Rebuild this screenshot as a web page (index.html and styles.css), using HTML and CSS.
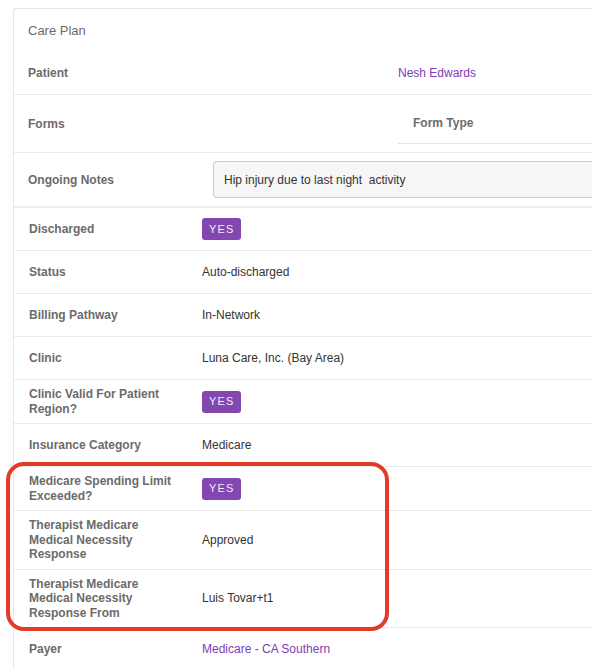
FILE: index.html
```html
<!DOCTYPE html>
<html>
<head>
<meta charset="utf-8">
<link rel="stylesheet" href="styles.css">
</head>
<body>
<div class="page">
  <div class="card">
    <div class="title">Care Plan</div>
    <div class="top-row patient">
      <div class="top-label">Patient</div>
      <div class="top-value"><span class="link">Nesh Edwards</span></div>
    </div>
    <div class="top-row forms">
      <div class="top-label">Forms</div>
      <div class="top-value nested">
        <div class="nested-head">Form Type</div>
      </div>
    </div>
    <div class="notes-row">
      <div class="notes-label">Ongoing Notes</div>
      <div class="notes-box">Hip injury due to last night&nbsp; activity</div>
    </div>
    <div class="details">
      <div class="row"><div class="label">Discharged</div><div class="value"><span class="badge">YES</span></div></div>
      <div class="row"><div class="label">Status</div><div class="value">Auto-discharged</div></div>
      <div class="row"><div class="label">Billing Pathway</div><div class="value">In-Network</div></div>
      <div class="row"><div class="label">Clinic</div><div class="value">Luna Care, Inc. (Bay Area)</div></div>
      <div class="row"><div class="label">Clinic Valid For Patient Region?</div><div class="value"><span class="badge">YES</span></div></div>
      <div class="row"><div class="label">Insurance Category</div><div class="value">Medicare</div></div>
      <div class="row"><div class="label">Medicare Spending Limit Exceeded?</div><div class="value"><span class="badge">YES</span></div></div>
      <div class="row"><div class="label">Therapist Medicare Medical Necessity Response</div><div class="value">Approved</div></div>
      <div class="row"><div class="label">Therapist Medicare Medical Necessity Response From</div><div class="value">Luis Tovar+t1</div></div>
      <div class="row"><div class="label">Payer</div><div class="value"><span class="link">Medicare - CA Southern</span></div></div>
    </div>
  </div>
  <div class="highlight"></div>
</div>
</body>
</html>
```
FILE: styles.css
```css
html, body {
  margin: 0;
  padding: 0;
  background: #ffffff;
  overflow: hidden;
}
body {
  font-family: "Liberation Sans", Arial, Helvetica, sans-serif;
  font-size: 12px;
  color: #333333;
}
.page {
  position: relative;
  width: 592px;
  height: 668px;
  overflow: hidden;
}
.card {
  margin: 8px 0 0 13px;
  width: 700px;
  border: 1px solid #e6e6e6;
  border-right: 0;
  border-bottom: 0;
  border-radius: 3px 0 0 0;
}
.title {
  height: 42px;
  display: flex;
  align-items: center;
  padding-left: 14px;
  font-size: 13px;
  color: #6b6b6b;
}
.top-row {
  display: grid;
  grid-template-columns: 369px 1fr;
  border-bottom: 1px solid #ebebeb;
}
.top-row.patient {
  height: 43px;
}
.top-row.forms {
  height: 57px;
}
.top-label {
  display: flex;
  align-items: center;
  padding-left: 14px;
  font-weight: bold;
  color: #6b6b6b;
}
.top-value {
  display: flex;
  align-items: center;
  padding-left: 15px;
}
.top-value.nested {
  align-items: flex-start;
  padding-left: 15px;
  padding-top: 7px;
}
.nested-head {
  flex: 1;
  height: 41px;
  display: flex;
  align-items: center;
  padding-left: 15px;
  border-bottom: 1px solid #e3e3e3;
  font-weight: bold;
  color: #6b6b6b;
}
.link {
  color: #7b3db3;
}
.notes-row {
  display: grid;
  grid-template-columns: 199px 1fr;
  height: 53px;
  align-items: center;
}
.notes-label {
  padding-left: 14px;
  font-weight: bold;
  color: #6b6b6b;
}
.notes-box {
  height: 37px;
  box-sizing: border-box;
  display: flex;
  align-items: center;
  padding-left: 10px;
  border: 1px solid #cccccc;
  border-right: 0;
  border-radius: 4px 0 0 4px;
  background: #f6f6f6;
  color: #333333;
}
.details {
  border-top: 2px solid #ececec;
}
.row {
  display: grid;
  grid-template-columns: 188px 1fr;
  min-height: 42px;
  border-bottom: 1px solid #ebebeb;
  align-items: center;
}
.label {
  padding: 7px 25px 7px 15px;
  font-weight: bold;
  line-height: 14.5px;
  color: #6b6b6b;
}
.value {
  line-height: 14.5px;
  color: #333333;
}
.badge {
  display: inline-flex;
  align-items: center;
  height: 22px;
  padding: 0 6px 0 7px;
  border-radius: 3px;
  background: #8447b1;
  color: #f3ecf8;
  font-size: 11px;
  letter-spacing: 1.2px;
  vertical-align: middle;
}
.highlight {
  position: absolute;
  left: 6px;
  top: 462px;
  width: 383px;
  height: 169px;
  box-sizing: border-box;
  border: 4px solid #e33b28;
  border-radius: 18px;
  pointer-events: none;
}
```
